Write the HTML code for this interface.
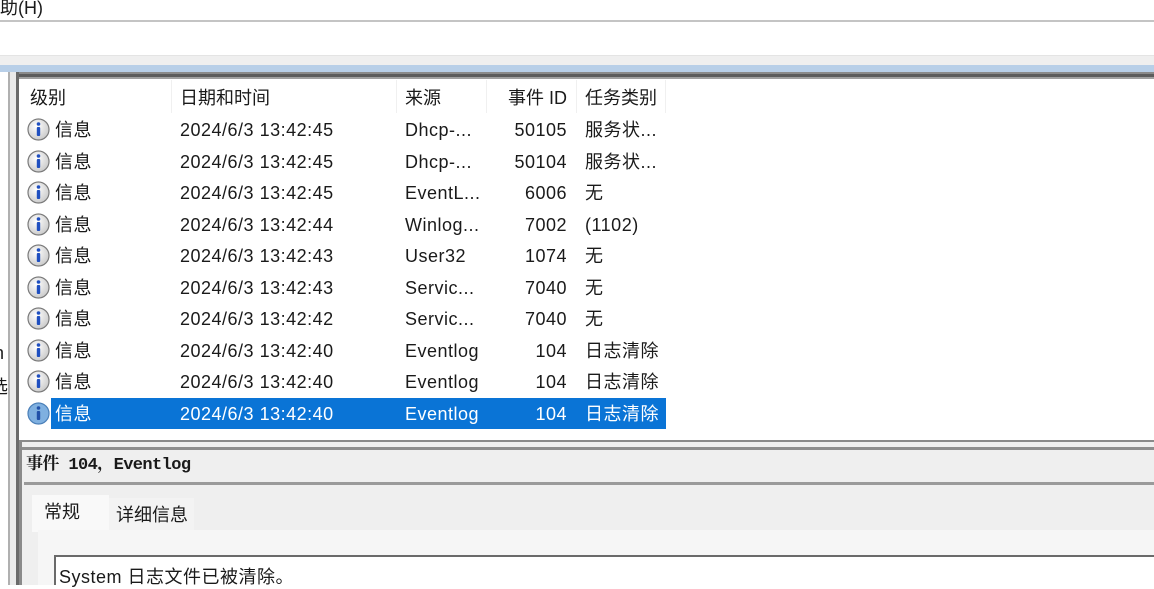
<!DOCTYPE html>
<html><head><meta charset="utf-8"><style>
*{margin:0;padding:0;box-sizing:border-box}
body{width:1154px;height:585px;overflow:hidden;background:#fff;position:relative;font-family:"Liberation Sans","Noto Sans CJK SC",sans-serif;font-size:18px;color:#1a1a1a}
.a{position:absolute}
.row{position:absolute;left:0;height:31px;width:700px;white-space:nowrap;letter-spacing:0.5px}
.row span{position:absolute;top:5px;line-height:22px}
.ico{position:absolute;left:27px;top:4px;width:23px;height:23px}
.sel{background:#0a74d6;color:#fff}
.hdr span{position:absolute;top:87px;line-height:22px}
</style></head><body>
<div class="a" style="left:0;top:-6px;font-size:18px">助(H)</div>
<div class="a" style="left:0;top:20px;width:1154px;height:2px;background:#c4c4c4"></div>
<div class="a" style="left:0;top:55px;width:1154px;height:10px;background:#efefef;border-top:1px solid #e4e4e4"></div>
<div class="a" style="left:0;top:65px;width:1154px;height:7px;background:#b8cfe8"></div>
<div class="a" style="left:10px;top:72px;width:1144px;height:2px;background:#8a8a8a"></div>
<div class="a" style="left:10px;top:74px;width:1144px;height:3px;background:#5c5c5c"></div>
<div class="a" style="left:10px;top:77px;width:1144px;height:2px;background:#a0a0a0"></div>
<div class="a" style="left:0;top:72px;width:9px;height:513px;background:#fff"></div>
<div class="a" style="left:8px;top:72px;width:2px;height:513px;background:#b0b0b0"></div>
<div class="a" style="left:10px;top:72px;width:6px;height:513px;background:#eaeaea"></div>
<div class="a" style="left:16px;top:72px;width:3px;height:513px;background:#6a6a6a"></div>
<div class="a" style="left:-6px;top:343px;font-size:18px">n</div>
<div class="a" style="left:-10px;top:373px;font-size:18px">选</div>
<div class="a" style="left:19px;top:79px;width:1135px;height:361px;background:#fff"></div>
<div class="hdr">
<span style="left:30px">级别</span><span style="left:180px">日期和时间</span><span style="left:405px">来源</span><span style="left:508px">事件 ID</span><span style="left:585px">任务类别</span>
</div>
<div class="a" style="left:171px;top:80px;width:1px;height:33px;background:#f0f0f0"></div>
<div class="a" style="left:396px;top:80px;width:1px;height:33px;background:#f0f0f0"></div>
<div class="a" style="left:486px;top:80px;width:1px;height:33px;background:#f0f0f0"></div>
<div class="a" style="left:576px;top:80px;width:1px;height:33px;background:#f0f0f0"></div>
<div class="a" style="left:665px;top:80px;width:1px;height:33px;background:#f0f0f0"></div>
<svg width="0" height="0" style="position:absolute"><defs>
<radialGradient id="g" cx="40%" cy="35%" r="70%"><stop offset="0" stop-color="#fff"/><stop offset="1" stop-color="#c8c8c8"/></radialGradient>
<symbol id="i" viewBox="0 0 23 23"><circle cx="11.5" cy="11.5" r="10.5" fill="url(#g)" stroke="#7a7a7a" stroke-width="1.2"/><circle cx="11.5" cy="6" r="1.8" fill="#1f4fc0"/><rect x="9.8" y="9" width="3.4" height="9" rx="1" fill="#1f4fc0"/></symbol>
<symbol id="i2" viewBox="0 0 23 23"><circle cx="11.5" cy="11.5" r="10.5" fill="#7fb0e0" stroke="#4a7fb8" stroke-width="1.2"/><circle cx="11.5" cy="6" r="1.8" fill="#2050a8"/><rect x="9.8" y="9" width="3.4" height="9" rx="1" fill="#2050a8"/></symbol>
</defs></svg>
<div class="row" style="top:114px"><svg class="ico"><use href="#i"/></svg><span style="left:55px">信息</span><span style="left:180px">2024/6/3 13:42:45</span><span style="left:405px">Dhcp-...</span><span style="right:133px">50105</span><span style="left:585px">服务状...</span></div>
<div class="row" style="top:145.5px"><svg class="ico"><use href="#i"/></svg><span style="left:55px">信息</span><span style="left:180px">2024/6/3 13:42:45</span><span style="left:405px">Dhcp-...</span><span style="right:133px">50104</span><span style="left:585px">服务状...</span></div>
<div class="row" style="top:177px"><svg class="ico"><use href="#i"/></svg><span style="left:55px">信息</span><span style="left:180px">2024/6/3 13:42:45</span><span style="left:405px">EventL...</span><span style="right:133px">6006</span><span style="left:585px">无</span></div>
<div class="row" style="top:208.5px"><svg class="ico"><use href="#i"/></svg><span style="left:55px">信息</span><span style="left:180px">2024/6/3 13:42:44</span><span style="left:405px">Winlog...</span><span style="right:133px">7002</span><span style="left:585px">(1102)</span></div>
<div class="row" style="top:240px"><svg class="ico"><use href="#i"/></svg><span style="left:55px">信息</span><span style="left:180px">2024/6/3 13:42:43</span><span style="left:405px">User32</span><span style="right:133px">1074</span><span style="left:585px">无</span></div>
<div class="row" style="top:271.5px"><svg class="ico"><use href="#i"/></svg><span style="left:55px">信息</span><span style="left:180px">2024/6/3 13:42:43</span><span style="left:405px">Servic...</span><span style="right:133px">7040</span><span style="left:585px">无</span></div>
<div class="row" style="top:303px"><svg class="ico"><use href="#i"/></svg><span style="left:55px">信息</span><span style="left:180px">2024/6/3 13:42:42</span><span style="left:405px">Servic...</span><span style="right:133px">7040</span><span style="left:585px">无</span></div>
<div class="row" style="top:334.5px"><svg class="ico"><use href="#i"/></svg><span style="left:55px">信息</span><span style="left:180px">2024/6/3 13:42:40</span><span style="left:405px">Eventlog</span><span style="right:133px">104</span><span style="left:585px">日志清除</span></div>
<div class="row" style="top:366px"><svg class="ico"><use href="#i"/></svg><span style="left:55px">信息</span><span style="left:180px">2024/6/3 13:42:40</span><span style="left:405px">Eventlog</span><span style="right:133px">104</span><span style="left:585px">日志清除</span></div>
<div class="a sel" style="left:51px;top:398px;width:615px;height:31px"></div>
<div class="row" style="top:397.5px;color:#fff"><svg class="ico"><use href="#i2"/></svg><span style="left:55px">信息</span><span style="left:180px">2024/6/3 13:42:40</span><span style="left:405px">Eventlog</span><span style="right:133px">104</span><span style="left:585px">日志清除</span></div>
<div class="a" style="left:19px;top:440px;width:1135px;height:145px;background:#efefef"></div>
<div class="a" style="left:19px;top:440px;width:1135px;height:2px;background:#8a8a8a"></div>
<div class="a" style="left:19px;top:447px;width:1135px;height:3px;background:#8e8e8e"></div>
<div class="a" style="left:19px;top:440px;width:3px;height:145px;background:#8a8a8a"></div>
<div class="a" style="left:26px;top:454px;font-family:'Liberation Mono','Noto Serif CJK SC',monospace;font-size:17px;line-height:24px;letter-spacing:-0.6px;font-weight:bold">事件 104，Eventlog</div>
<div class="a" style="left:24px;top:482px;width:1130px;height:3px;background:#9a9a9a"></div>
<div class="a" style="left:32px;top:495px;width:77px;height:37px;background:#f9f9f9"></div>
<div class="a" style="left:44px;top:500px;line-height:24px">常规</div>
<div class="a" style="left:109px;top:498px;width:85px;height:32px;background:#f3f3f3"></div>
<div class="a" style="left:116px;top:503px;line-height:24px">详细信息</div>
<div class="a" style="left:38px;top:530px;width:1116px;height:55px;background:#f6f6f6"></div>
<div class="a" style="left:54px;top:555px;width:1100px;height:30px;background:#fff;border-top:2px solid #6a6a6a;border-left:2px solid #6a6a6a"></div>
<div class="a" style="left:59px;top:565px;line-height:24px;letter-spacing:0.5px">System 日志文件已被清除。</div>
</body></html>
